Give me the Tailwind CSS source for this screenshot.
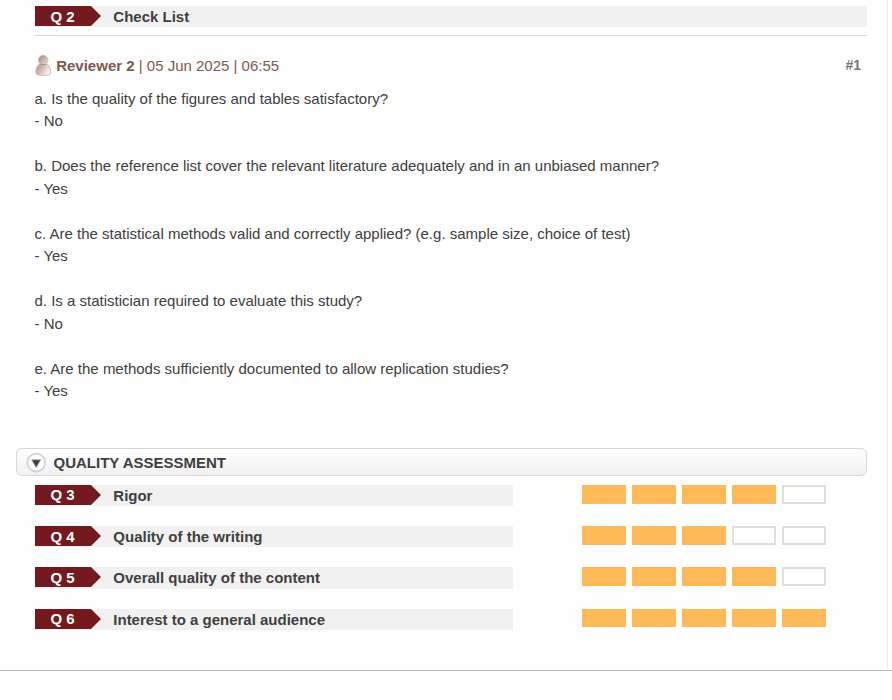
<!DOCTYPE html>
<html lang="en">
<head>
<meta charset="utf-8">
<title>Review report</title>
<script src="https://cdn.jsdelivr.net/npm/@tailwindcss/browser@4"></script>
</head>
<body class="bg-[#fefefe] font-['Liberation_Sans',Arial,sans-serif] text-[15px] leading-[22.5px] text-[#404040] h-[700px] overflow-hidden">
<main class="h-[671px] border-b border-[#b8b8b8]">
<div class="w-[888px] h-[669px] border-r border-[#eeeeee] pt-[6px]">
  <section class="ml-[35px] w-[832px]">
    <h2 class="flex h-[21px] bg-[#f1f1f1] font-bold leading-[21px]">
      <span class="w-[66px] h-[20px] bg-[#74191d] text-white pl-[15.5px] [clip-path:polygon(0_0,56px_0,100%_50%,56px_100%,0_100%)]">Q 2</span>
      <span class="pl-[12.3px]">Check List</span>
    </h2>
    <hr class="mt-[8px] border-t border-[#d8d8d8]">
    <div class="mt-[18px] h-[24px] flex items-start text-[#7d5a4f]">
      <svg class="w-[17px] h-[22px] shrink-0" viewBox="0 0 17 22">
        <defs>
          <linearGradient id="skin" x1="0" y1="0" x2="1" y2=".8"><stop offset="0" stop-color="#a5877b"/><stop offset=".5" stop-color="#c4aba1"/><stop offset="1" stop-color="#e8dcd7"/></linearGradient>
          <linearGradient id="coat" x1="0" y1="0" x2="1" y2=".5"><stop offset="0" stop-color="#a5877b"/><stop offset=".45" stop-color="#cdb7ae"/><stop offset="1" stop-color="#f8f3f1"/></linearGradient>
        </defs>
        <path d="M5 9.500C2.300 11.500.9 14.600.8 18c0 2.200 1.500 3.200 4 3.200h7c2.500 0 3.900-1 3.900-3.200-.1-3.400-1.500-6.500-4.200-8.500z" fill="url(#coat)" stroke="#cbb8b0" stroke-width="1"/>
        <circle cx="8.200" cy="6.100" r="4.700" fill="url(#skin)" stroke="#c8b3ab" stroke-width=".9"/>
        <path d="M5.500 10.200q2.700 1.300 5.400 0" fill="none" stroke="#a98d82" stroke-width="1"/>
      </svg>
      <p class="ml-[4.200px] leading-[23px]"><b>Reviewer 2</b> | 05 Jun 2025 | 06:55</p>
      <b class="ml-auto mr-[6px] text-[14px] leading-[22px] text-[#777777]">#1</b>
    </div>
    <div class="mt-[9.700px] mb-[0.300px] -ml-[0.5px] h-[360px]">
      <p>a. Is the quality of the figures and tables satisfactory?<br>- No</p>
      <p class="mt-[22.5px]">b. Does the reference list cover the relevant literature adequately and in an unbiased manner?<br>- Yes</p>
      <p class="mt-[22.5px]">c. Are the statistical methods valid and correctly applied? (e.g. sample size, choice of test)<br>- Yes</p>
      <p class="mt-[22.5px]">d. Is a statistician required to evaluate this study?<br>- No</p>
      <p class="mt-[22.5px]">e. Are the methods sufficiently documented to allow replication studies?<br>- Yes</p>
    </div>
  </section>
  <section>
    <h2 class="ml-[16px] w-[851px] h-[28px] flex items-center rounded-[6px] border border-[#d8d8d8] bg-linear-to-b from-white to-[#f0f0f0] font-bold pl-[9px]">
      <svg class="w-[21px] h-[22px] shrink-0 mt-[2px]" viewBox="0 0 21 22"><circle cx="10.300" cy="10.600" r="8.900" fill="#fff" stroke="#d2d2d2" stroke-width="1.800"/><path d="M5.600 7.800h9.200l-4.600 7.700z" fill="#404040" stroke="#aaa" stroke-width=".7"/></svg>
      <span class="pl-[6.500px] leading-[28px] mt-[2px]">QUALITY ASSESSMENT</span>
    </h2>
    <div class="mt-[9px] ml-[35px] flex flex-col">
      <div class="h-[41px] flex items-start">
        <h3 class="flex w-[478px] h-[21px] bg-[#f1f1f1] font-bold leading-[21px]"><span class="w-[66px] h-[20px] bg-[#74191d] text-white pl-[15.5px] leading-[20px] [clip-path:polygon(0_0,56px_0,100%_50%,56px_100%,0_100%)]">Q 3</span><span class="pl-[12.3px]">Rigor</span></h3>
        <div class="ml-[69px] flex gap-[6px] h-[19px]"><i class="w-[44px] bg-[#feb958]"></i><i class="w-[44px] bg-[#feb958]"></i><i class="w-[44px] bg-[#feb958]"></i><i class="w-[44px] bg-[#feb958]"></i><i class="w-[44px] border-2 border-[#e0e0e0]"></i></div>
      </div>
      <div class="h-[41px] flex items-start">
        <h3 class="flex w-[478px] h-[21px] bg-[#f1f1f1] font-bold leading-[21px]"><span class="w-[66px] h-[20px] bg-[#74191d] text-white pl-[15.5px] [clip-path:polygon(0_0,56px_0,100%_50%,56px_100%,0_100%)]">Q 4</span><span class="pl-[12.3px]">Quality of the writing</span></h3>
        <div class="ml-[69px] flex gap-[6px] h-[19px]"><i class="w-[44px] bg-[#feb958]"></i><i class="w-[44px] bg-[#feb958]"></i><i class="w-[44px] bg-[#feb958]"></i><i class="w-[44px] border-2 border-[#e0e0e0]"></i><i class="w-[44px] border-2 border-[#e0e0e0]"></i></div>
      </div>
      <div class="h-[42px] flex items-start">
        <h3 class="flex w-[478px] h-[22px] bg-[#f1f1f1] font-bold leading-[21px]"><span class="w-[66px] h-[20px] bg-[#74191d] text-white pl-[15.5px] [clip-path:polygon(0_0,56px_0,100%_50%,56px_100%,0_100%)]">Q 5</span><span class="pl-[12.3px]">Overall quality of the content</span></h3>
        <div class="ml-[69px] flex gap-[6px] h-[19px]"><i class="w-[44px] bg-[#feb958]"></i><i class="w-[44px] bg-[#feb958]"></i><i class="w-[44px] bg-[#feb958]"></i><i class="w-[44px] bg-[#feb958]"></i><i class="w-[44px] border-2 border-[#e0e0e0]"></i></div>
      </div>
      <div class="h-[21px] flex items-start">
        <h3 class="flex w-[478px] h-[21px] bg-[#f1f1f1] font-bold leading-[21px]"><span class="w-[66px] h-[20px] bg-[#74191d] text-white pl-[15.5px] leading-[20px] [clip-path:polygon(0_0,56px_0,100%_50%,56px_100%,0_100%)]">Q 6</span><span class="pl-[12.3px]">Interest to a general audience</span></h3>
        <div class="ml-[69px] flex gap-[6px] h-[18px]"><i class="w-[44px] bg-[#feb958]"></i><i class="w-[44px] bg-[#feb958]"></i><i class="w-[44px] bg-[#feb958]"></i><i class="w-[44px] bg-[#feb958]"></i><i class="w-[44px] bg-[#feb958]"></i></div>
      </div>
    </div>
  </section>
</div>
</main>
</body>
</html>
